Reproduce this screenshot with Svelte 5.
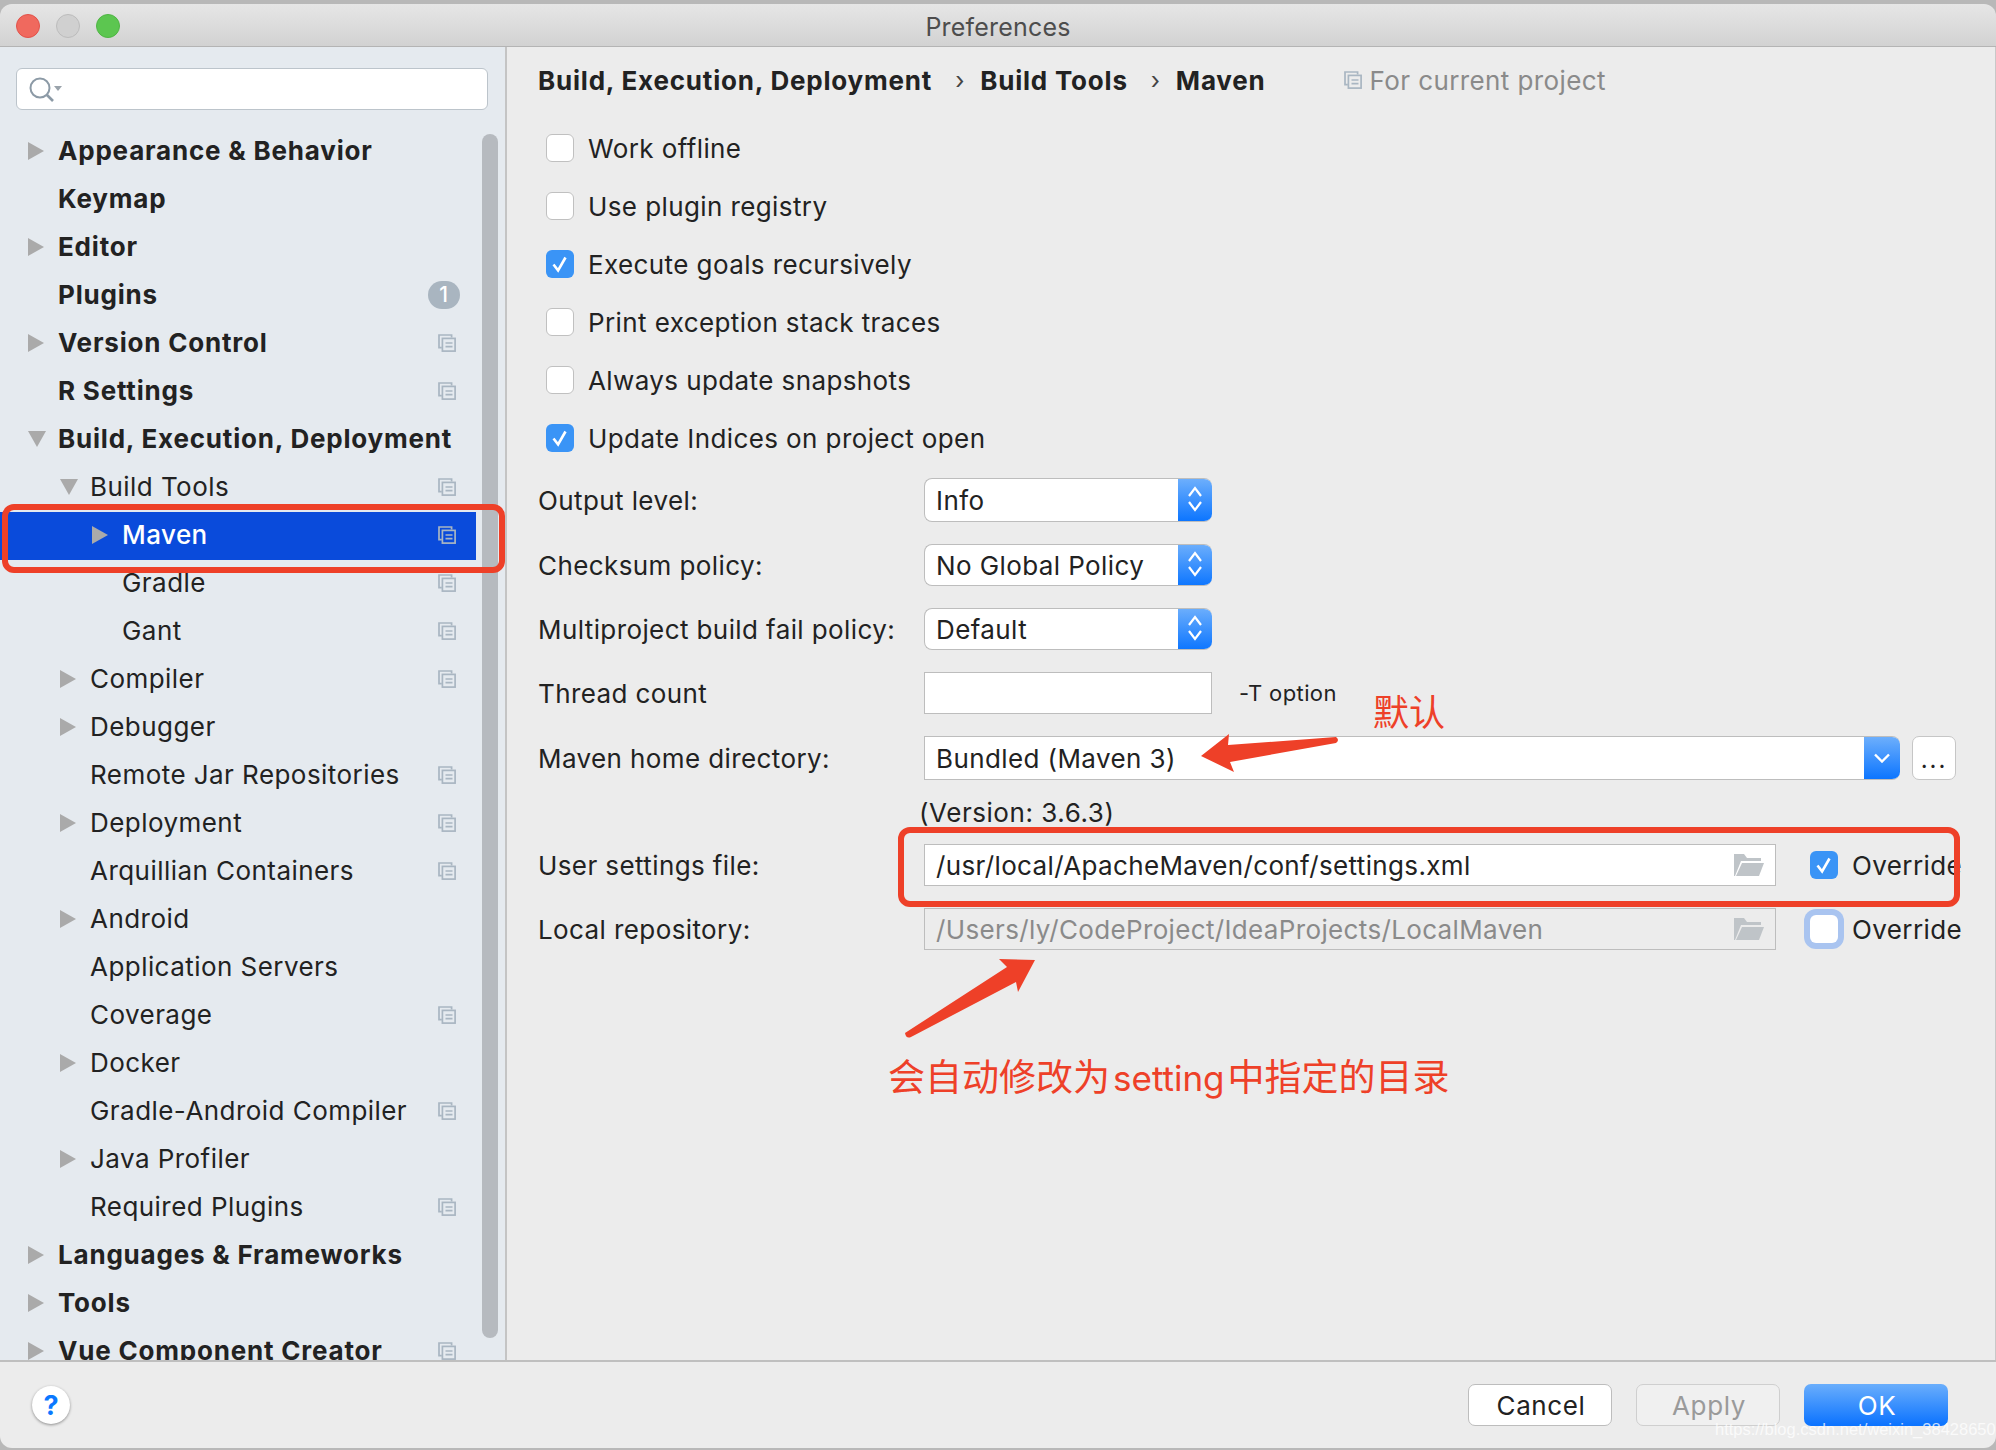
<script>
  const nodes = [
    { name: 'Appearance & Behavior', level: 0, arrow: 'right' },
    { name: 'Keymap', level: 0 },
    { name: 'Editor', level: 0, arrow: 'right' },
    { name: 'Plugins', level: 0, badge: 1 },
    { name: 'Version Control', level: 0, arrow: 'right', proj: true },
    { name: 'R Settings', level: 0, proj: true },
    { name: 'Build, Execution, Deployment', level: 0, arrow: 'down' },
    { name: 'Build Tools', level: 1, arrow: 'down', proj: true },
    { name: 'Maven', level: 2, arrow: 'right', proj: true, selected: true },
    { name: 'Gradle', level: 2, proj: true },
    { name: 'Gant', level: 2, proj: true },
    { name: 'Compiler', level: 1, arrow: 'right', proj: true },
    { name: 'Debugger', level: 1, arrow: 'right' },
    { name: 'Remote Jar Repositories', level: 1, proj: true },
    { name: 'Deployment', level: 1, arrow: 'right', proj: true },
    { name: 'Arquillian Containers', level: 1, proj: true },
    { name: 'Android', level: 1, arrow: 'right' },
    { name: 'Application Servers', level: 1 },
    { name: 'Coverage', level: 1, proj: true },
    { name: 'Docker', level: 1, arrow: 'right' },
    { name: 'Gradle-Android Compiler', level: 1, proj: true },
    { name: 'Java Profiler', level: 1, arrow: 'right' },
    { name: 'Required Plugins', level: 1, proj: true },
    { name: 'Languages & Frameworks', level: 0, arrow: 'right' },
    { name: 'Tools', level: 0, arrow: 'right' },
    { name: 'Vue Component Creator', level: 0, arrow: 'right', proj: true }
  ];

  const checks = [
    { label: 'Work offline', on: false },
    { label: 'Use plugin registry', on: false },
    { label: 'Execute goals recursively', on: true },
    { label: 'Print exception stack traces', on: false },
    { label: 'Always update snapshots', on: false },
    { label: 'Update Indices on project open', on: true }
  ];

  const selects = [
    { label: 'Output level:', value: 'Info', tall: true },
    { label: 'Checksum policy:', value: 'No Global Policy' },
    { label: 'Multiproject build fail policy:', value: 'Default' }
  ];
</script>

{#snippet projIcon()}
  <svg class="proj" width="18" height="18" viewBox="0 0 18 18" fill="none" stroke="#a9b6c2" stroke-width="1.7">
    <path d="M3.8 13.6H1V1h12.6v2.6" />
    <rect x="4.4" y="4.4" width="12.7" height="12.7" />
    <path d="M7.5 9h7M7.5 12.6h7" />
  </svg>
{/snippet}

{#snippet tick()}
  <svg width="28" height="28" viewBox="0 0 28 28" fill="none" stroke="#fff" stroke-width="2.6">
    <path d="M7.5 14.5l4.6 6L19.5 7.500" />
  </svg>
{/snippet}

{#snippet folder()}
  <svg class="folder" width="30" height="22" viewBox="0 0 30 22" fill="#bfc4c8">
    <path d="M0 0h10l3 4h14v3H7L1 22H0z" />
    <path d="M8 9h22l-5 13H2z" />
  </svg>
{/snippet}

<div class="window">
  <div class="titlebar">
    <div class="lights">
      <span class="light red"></span>
      <span class="light grey"></span>
      <span class="light green"></span>
    </div>
    <div class="title">Preferences</div>
  </div>

  <div class="body">
    <aside class="sidebar">
      <div class="search">
        <svg width="34" height="28" viewBox="0 0 34 28" fill="none" stroke="#8c9aa6" stroke-width="2">
          <circle cx="12" cy="11" r="9.500" />
          <path d="M19 18l6 6" stroke-width="2.600" />
          <path d="M26 9h8l-4 5z" fill="#9aa3ab" stroke="none" />
        </svg>
      </div>
      <div class="treewrap">
        <div class="tree">
          {#each nodes as node}
            <div class="node lv{node.level}" class:selected={node.selected} class:strong={node.level === 0}>
              <span class="arrowbox">
                {#if node.arrow === 'right'}
                  <span class="tri-right"></span>
                {:else if node.arrow === 'down'}
                  <span class="tri-down"></span>
                {/if}
              </span>
              <span class="name">{node.name}</span>
              {#if node.badge}
                <span class="badge">{node.badge}</span>
              {:else if node.proj}
                {@render projIcon()}
              {/if}
            </div>
          {/each}
        </div>
        <div class="scroll"><div class="thumb"></div></div>
      </div>
    </aside>

    <main class="main">
      <div class="crumbs">
        <b>Build, Execution, Deployment</b>
        <span class="sep">›</span>
        <b>Build Tools</b>
        <span class="sep">›</span>
        <b>Maven</b>
        <span class="scope">
          <svg width="18" height="18" viewBox="0 0 18 18" fill="none" stroke="#a9b6c2" stroke-width="1.7">
            <path d="M3.8 13.6H1V1h12.6v2.6" />
            <rect x="4.4" y="4.4" width="12.7" height="12.7" />
            <path d="M7.5 9h7M7.5 12.6h7" />
          </svg>
          For current project
        </span>
      </div>

      <div class="checks">
        {#each checks as c}
          <div class="check-row">
            <span class="box" class:on={c.on}>
              {#if c.on}{@render tick()}{/if}
            </span>
            <span>{c.label}</span>
          </div>
        {/each}
      </div>

      <div class="form">
        {#each selects as s}
          <div class="row" class:tall={s.tall}>
            <label>{s.label}</label>
            <div class="select">
              <span>{s.value}</span>
              <span class="spin">
                <svg width="16" height="28" viewBox="0 0 16 28" fill="none" stroke="#fff" stroke-width="2.2">
                  <path d="M2 10l6-8 6 8M2 16l6 8 6-8" />
                </svg>
              </span>
            </div>
          </div>
        {/each}

        <div class="row">
          <label>Thread count</label>
          <div class="plain"></div>
          <span class="hint">-T option</span>
        </div>

        <div class="row tall">
          <label>Maven home directory:</label>
          <div class="combo">
            <span class="combo-text">Bundled (Maven 3)</span>
            <span class="drop">
              <svg width="16" height="10" viewBox="0 0 16 10" fill="none" stroke="#fff" stroke-width="2.400">
                <path d="M1 1.500l7 7 7-7" />
              </svg>
            </span>
          </div>
          <div class="dots">...</div>
        </div>

        <div class="row version"><label></label><span>(Version: 3.6.3)</span></div>

        <div class="row">
          <label>User settings file:</label>
          <div class="path">
            <span>/usr/local/ApacheMaven/conf/settings.xml</span>
            {@render folder()}
          </div>
          <div class="override">
            <span class="box on">{@render tick()}</span>
            <span>Override</span>
          </div>
        </div>

        <div class="row">
          <label>Local repository:</label>
          <div class="path disabled">
            <span>/Users/ly/CodeProject/IdeaProjects/LocalMaven</span>
            {@render folder()}
          </div>
          <div class="override">
            <span class="box ring"></span>
            <span>Override</span>
          </div>
        </div>
      </div>
    </main>
  </div>

  <footer class="footer">
    <div class="help">?</div>
    <div class="buttons">
      <div class="btn">Cancel</div>
      <div class="btn off">Apply</div>
      <div class="btn ok">OK</div>
    </div>
  </footer>

  <!-- annotations drawn on top of the screenshot -->
  <div class="mark mark-maven"></div>
  <div class="mark mark-settings"></div>
  <svg class="arrows" width="1996" height="1450" viewBox="0 0 1996 1450" fill="#ee4028">
    <path d="M1201 756L1229 734 1228 745 1336 737Q1340 740 1336 743L1230 762 1234 772z" />
    <path d="M1035 960L999 959 1007 967 905 1033Q906 1039 911 1037L1016 982 1018 992z" />
  </svg>
  <div class="note note-default">默认</div>
  <div class="note note-auto">会自动修改为<span class="latin">setting</span>中指定的目录</div>
  <div class="watermark">https://blog.csdn.net/weixin_38428650</div>
</div>

<style>
  :global(body) {
    margin: 0;
    background: #b8b8b8;
  }
  .window {
    position: relative;
    width: 1996px;
    height: 1450px;
    padding-top: 4px;
    box-sizing: border-box;
    overflow: hidden;
    font-family: Inter, "Noto Sans CJK SC", sans-serif;
    font-size: 26px;
    color: #222;
  }
  .titlebar {
    height: 43px;
    padding-top: 3px;
    display: flex;
    align-items: center;
    justify-content: center;
    position: relative;
    border-radius: 12px 12px 0 0;
    background: linear-gradient(#e6e6e6, #d2d2d2);
    border-bottom: 1px solid #b4b4b4;
    box-sizing: border-box;
  }
  .lights {
    position: absolute;
    left: 16px;
    top: 10px;
    display: flex;
    gap: 16px;
  }
  .light {
    width: 24px;
    height: 24px;
    border-radius: 50%;
    box-sizing: border-box;
  }
  .red { background: #f0695e; border: 1px solid #e2524a; }
  .grey { background: #d0d0d0; border: 1px solid #bcbcbc; }
  .green { background: #5cc650; border: 1px solid #4fb544; }
  .title {
    color: #4d4d4d;
    font-size: 25px;
    letter-spacing: 0.2px;
  }
  .body {
    display: flex;
    height: 1313px;
    border-bottom: 2px solid #bfbfbf;
  }
  .sidebar {
    width: 507px;
    box-sizing: border-box;
    flex: none;
    background: #e5eaef;
    border-right: 2px solid #c4c4c4;
    display: flex;
    flex-direction: column;
    overflow: hidden;
  }
  .search {
    height: 42px;
    width: 472px;
    flex: none;
    margin: 21px 0 16px 16px;
    padding: 8px 0 0 11px;
    box-sizing: border-box;
    background: #fff;
    border: 1px solid #bcc4cb;
    border-radius: 6px;
  }
  .treewrap {
    display: flex;
    flex: 1;
    min-height: 0;
  }
  .tree {
    width: 476px;
    flex: none;
    margin-top: 2px;
  }
  .node {
    display: flex;
    align-items: center;
    height: 48px;
    padding-right: 20px;
    padding-bottom: 3px;
    box-sizing: border-box;
    white-space: nowrap;
    letter-spacing: 0.45px;
  }
  .node.strong {
    font-weight: 700;
    letter-spacing: 0.8px;
  }
  .lv0 { padding-left: 28px; }
  .lv1 { padding-left: 60px; }
  .lv2 { padding-left: 92px; }
  .arrowbox {
    width: 30px;
    flex: none;
    display: flex;
  }
  .tri-right {
    width: 0;
    height: 0;
    border-left: 16px solid #aaa;
    border-top: 9px solid transparent;
    border-bottom: 9px solid transparent;
  }
  .tri-down {
    width: 0;
    height: 0;
    border-top: 16px solid #aaa;
    border-left: 9px solid transparent;
    border-right: 9px solid transparent;
  }
  .name {
    flex: 1;
  }
  .selected {
    background: #0a4bdb;
    color: #fff;
    font-weight: 500;
  }
  .proj {
    flex: none;
  }
  .badge {
    width: 32px;
    height: 28px;
    margin-right: -4px;
    border-radius: 14px;
    background: #a9b5c0;
    color: #fff;
    font-size: 21px;
    font-weight: 500;
    display: flex;
    align-items: center;
    justify-content: center;
  }
  .scroll {
    padding: 8px 0 0 6px;
  }
  .thumb {
    width: 16px;
    height: 1204px;
    border-radius: 8px;
    background: #b6babf;
  }
  .main {
    flex: 1;
    background: #ececec;
    padding-left: 31px;
    border-right: 1px solid #c8c8c8;
    min-width: 0;
  }
  .crumbs {
    height: 66px;
    display: flex;
    align-items: center;
    white-space: nowrap;
    letter-spacing: 0.8px;
  }
  .sep {
    margin: 0 15px 0 23px;
    font-size: 24px;
    color: #444;
  }
  .scope {
    margin-left: 78px;
    display: flex;
    align-items: center;
    gap: 8px;
    color: #8a8a8a;
    font-weight: 400;
    letter-spacing: 0.4px;
  }
  .checks {
    margin-top: 6px;
    padding-left: 8px;
  }
  .check-row {
    height: 58px;
    display: flex;
    align-items: center;
    gap: 14px;
    letter-spacing: 0.4px;
  }
  .box {
    width: 28px;
    height: 28px;
    flex: none;
    box-sizing: border-box;
    background: #fff;
    border: 1px solid #c0c0c0;
    border-radius: 6px;
  }
  .box.on {
    background: #3a94f6;
    border: none;
  }
  .box.ring {
    border: none;
    box-shadow: 0 0 0 6px #a9c4f0;
  }
  .form {
    margin-top: 11px;
    display: flex;
    flex-direction: column;
    gap: 22px;
  }
  .row {
    height: 42px;
    display: flex;
    align-items: center;
    letter-spacing: 0.4px;
    white-space: nowrap;
  }
  .row.tall {
    height: 44px;
  }
  .row.version {
    height: 20px;
  }
  .row.version span {
    margin-left: -5px;
    letter-spacing: 0.55px;
  }
  label {
    width: 386px;
    flex: none;
  }
  .select {
    width: 288px;
    height: 100%;
    flex: none;
    box-sizing: border-box;
    display: flex;
    align-items: center;
    justify-content: space-between;
    padding-left: 11px;
    background: #fff;
    border: 1px solid #bdbdbd;
    border-right: none;
    border-radius: 8px;
    overflow: hidden;
  }
  .spin {
    width: 34px;
    height: 44px;
    display: flex;
    align-items: center;
    justify-content: center;
    background: linear-gradient(#6fb0fc, #0a74ff);
  }
  .plain {
    width: 288px;
    height: 100%;
    flex: none;
    box-sizing: border-box;
    background: #fff;
    border: 1px solid #bdbdbd;
  }
  .hint {
    margin-left: 27px;
    font-size: 22px;
    letter-spacing: 0.4px;
  }
  .combo {
    width: 976px;
    height: 100%;
    flex: none;
    box-sizing: border-box;
    display: flex;
    align-items: center;
    justify-content: space-between;
    background: #fff;
    border: 1px solid #bdbdbd;
    border-right: none;
    border-radius: 0 8px 8px 0;
    overflow: hidden;
  }
  .combo-text {
    padding-left: 11px;
  }
  .drop {
    width: 36px;
    height: 44px;
    display: flex;
    align-items: center;
    justify-content: center;
    background: linear-gradient(#6fb0fc, #0a74ff);
  }
  .dots {
    width: 44px;
    height: 100%;
    flex: none;
    margin-left: 12px;
    box-sizing: border-box;
    padding-top: 8px;
    text-align: center;
    background: #fff;
    border: 1px solid #c6c6c6;
    border-radius: 7px;
    font-size: 24px;
    letter-spacing: 2px;
  }
  .path {
    width: 852px;
    height: 100%;
    flex: none;
    box-sizing: border-box;
    display: flex;
    align-items: center;
    justify-content: space-between;
    padding: 0 11px;
    letter-spacing: 0.35px;
    background: #fff;
    border: 1px solid #bdbdbd;
  }
  .path.disabled {
    background: #ececec;
    color: #8a8a8a;
  }
  .override {
    margin-left: 34px;
    flex: none;
    display: flex;
    align-items: center;
    gap: 14px;
  }
  .footer {
    height: 86px;
    display: flex;
    align-items: center;
    justify-content: space-between;
    padding: 0 48px 0 32px;
    background: #ececec;
    border-radius: 0 0 12px 12px;
  }
  .help {
    width: 38px;
    height: 38px;
    border-radius: 50%;
    background: #fff;
    color: #0a78ff;
    font-weight: 700;
    font-size: 27px;
    box-shadow: 0 1px 3px rgba(0, 0, 0, 0.4);
    display: flex;
    align-items: center;
    justify-content: center;
  }
  .buttons {
    display: flex;
    gap: 24px;
  }
  .btn {
    width: 144px;
    height: 42px;
    box-sizing: border-box;
    display: flex;
    align-items: center;
    justify-content: center;
    padding-left: 2px;
    background: #fff;
    border: 1px solid #bdbdbd;
    border-radius: 7px;
    letter-spacing: 0.6px;
  }
  .btn.off {
    background: #f0f0f0;
    border-color: #cfcfcf;
    color: #9a9a9a;
  }
  .btn.ok {
    background: linear-gradient(#6aaefc, #0a72ff);
    border: none;
    color: #fff;
  }
  .mark {
    position: absolute;
    box-sizing: border-box;
    border: 6px solid #ee4028;
    border-radius: 12px;
  }
  .mark-maven {
    left: 2px;
    top: 504px;
    width: 503px;
    height: 69px;
  }
  .mark-settings {
    left: 898px;
    top: 827px;
    width: 1062px;
    height: 80px;
  }
  .arrows {
    position: absolute;
    left: 0;
    top: 0;
  }
  .note {
    position: absolute;
    color: #ee4028;
    white-space: nowrap;
  }
  .note-default {
    left: 1373px;
    top: 690px;
    font-size: 36px;
    line-height: 46px;
  }
  .note-auto {
    left: 888px;
    top: 1054px;
    font-size: 37px;
    line-height: 48px;
  }
  .latin {
    margin: 0 3px;
    font-size: 35px;
  }
  .watermark {
    position: absolute;
    left: 1715px;
    top: 1420px;
    font-family: "Liberation Sans", sans-serif;
    font-size: 16.5px;
    color: rgba(255, 255, 255, 0.75);
    white-space: nowrap;
  }
</style>
